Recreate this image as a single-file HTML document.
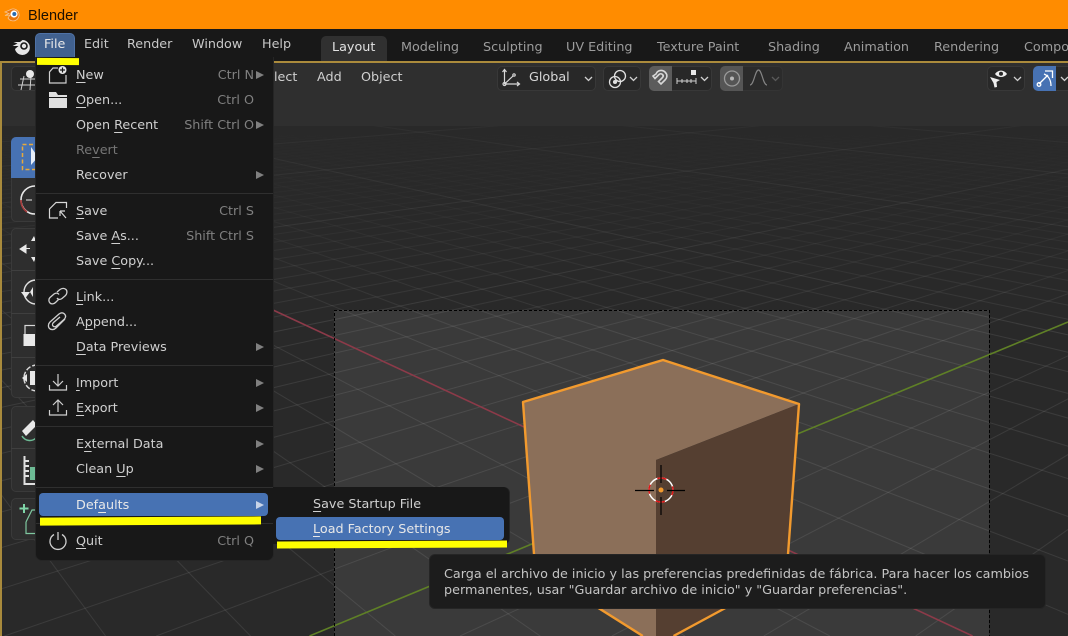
<!DOCTYPE html>
<html><head><meta charset="utf-8"><style>
*{box-sizing:border-box}
html,body{margin:0;padding:0}
body{width:1068px;height:636px;overflow:hidden;position:relative;background:#282828;font-family:"DejaVu Sans",sans-serif;font-size:12.75px;color:#d0d0d0}
div,span.a{position:absolute}
.t{height:20px;line-height:20px;white-space:nowrap}
u{text-decoration:underline;text-underline-offset:3px;text-decoration-thickness:1px}
.r{left:76px}
.k{right:814px;color:#808080}
.ar{width:0;height:0;border-left:8px solid #808080;border-top:4px solid transparent;border-bottom:4px solid transparent;left:256px;margin-top:1px}
.sep{left:36px;width:237px;height:1px;background:#2f2f2f}
.w{background:#282828;border:1px solid #383838;border-radius:5px}
.tab{top:38px;color:#9c9c9c}
.m{top:35px;color:#c8c8c8}
svg{position:absolute;overflow:visible}
</style></head><body>

<svg id="vp" style="left:0;top:0;overflow:hidden" width="1068" height="636" viewBox="0 0 1068 636">
<defs>
<linearGradient id="gm" gradientUnits="userSpaceOnUse" x1="0" y1="126" x2="0" y2="340"><stop offset="0" stop-color="#fff" stop-opacity="0"/><stop offset=".35" stop-color="#fff" stop-opacity=".02"/><stop offset="1" stop-color="#fff" stop-opacity=".085"/></linearGradient>
<linearGradient id="gM" gradientUnits="userSpaceOnUse" x1="0" y1="126" x2="0" y2="340"><stop offset="0" stop-color="#fff" stop-opacity=".03"/><stop offset="1" stop-color="#fff" stop-opacity=".1"/></linearGradient>
</defs>
<rect x="0" y="0" width="1068" height="636" fill="#292929"/>
<rect x="334" y="310" width="655" height="326" fill="#3a3a3a"/>
<g id="grid" fill="none" stroke-width="1"></g>
<line x1="273" y1="310" x2="972.600" y2="636" stroke="#8c3a49" stroke-width="1.6"/>
<line x1="1068" y1="322" x2="309.500" y2="636" stroke="#5f8026" stroke-width="1.6"/>
<path d="M523 402L663 360L799 404L656 460V636H642.800L535 568Z" fill="#8b6f59"/>
<path d="M656 460L799 404L786.500 575L673.500 636H656Z" fill="#553f31"/>
<path d="M642.800 636L535 568L523 402L663 360L799 404L786.500 575L673.500 636" fill="none" stroke="#f29a2e" stroke-width="2.400" stroke-linejoin="round"/>
<path d="M334.500 636V310.500H989.500V636" fill="none" stroke="#000" stroke-width="1" stroke-dasharray="3 2"/>
<circle cx="661" cy="490" r="12" fill="none" stroke="#fff" stroke-width="1.5"/>
<circle cx="661" cy="490" r="12" fill="none" stroke="#e01515" stroke-width="1.5" stroke-dasharray="9.400 9.400" stroke-dashoffset="4"/>
<path d="M635 490.500H654M667 490.500H685M661 465V483M661 497V515" stroke="#000" stroke-width="1.200"/>
<circle cx="661" cy="490" r="2.500" fill="#f29a2e"/>
</svg>

<!-- viewport header -->
<div style="left:0;top:63px;width:1068px;height:63px;background:#2f2f2f"></div>
<!-- gold frame -->
<div style="left:0;top:61px;width:1068px;height:2px;background:#ab8b3c"></div>
<div style="left:0;top:61px;width:1.500px;height:575px;background:#a88a3c"></div>

<!-- title bar -->
<div style="left:0;top:0;width:1068px;height:29px;background:#ff8c00"></div>
<svg style="left:4px;top:6px" width="18" height="16" viewBox="0 0 18 16"><path d="M1 6L8 3A6 6 0 1 1 4 12L6 9L1 9.500L5 7.500Z" fill="#e8740c" stroke="#f6c48c" stroke-width=".8"/><circle cx="10" cy="8" r="3.600" fill="#fff"/><circle cx="10.300" cy="8" r="2" fill="#2a6bb0"/></svg>
<div class="t" style="left:28px;top:6px;font:14.500px/20px 'Liberation Sans',sans-serif;color:#1c1000">Blender</div>

<!-- top bar -->
<div style="left:0;top:29px;width:1068px;height:32px;background:#181818"></div>
<svg style="left:12px;top:35px" width="20" height="20" viewBox="0 0 20 20"><path d="M1.500 7H8L10.500 5A7.500 7.500 0 1 1 3 14L6.500 11L.5 11L5.500 8.500" fill="#e6e6e6"/><circle cx="12" cy="11" r="3.800" fill="#181818"/><circle cx="12" cy="11" r="2.200" fill="#e6e6e6"/></svg>
<div style="left:35px;top:33px;width:40px;height:25px;background:#41618f;border-radius:5px 5px 0 0;border:1px solid #4f72a6;border-bottom:0"></div>
<div class="t m" style="left:44px;top:35px;color:#e8e8e8">File</div>
<div class="t m" style="left:84px">Edit</div>
<div class="t m" style="left:127px">Render</div>
<div class="t m" style="left:192px">Window</div>
<div class="t m" style="left:262px">Help</div>
<div style="left:321px;top:36px;width:66px;height:25px;background:#303030;border-radius:5px 5px 0 0"></div>
<div class="t tab" style="left:332px;color:#e2e2e2">Layout</div>
<div class="t tab" style="left:401px">Modeling</div>
<div class="t tab" style="left:483px">Sculpting</div>
<div class="t tab" style="left:566px">UV Editing</div>
<div class="t tab" style="left:657px">Texture Paint</div>
<div class="t tab" style="left:768px">Shading</div>
<div class="t tab" style="left:844px">Animation</div>
<div class="t tab" style="left:934px">Rendering</div>
<div class="t tab" style="left:1024px;width:44px;overflow:hidden">Compo</div>

<!-- header widgets -->
<div class="w" style="left:11px;top:66px;width:30px;height:25px"></div>
<svg style="left:0;top:60px" width="40" height="40" viewBox="0 0 40 40"><path d="M20 19H35M18 25H35M24 16L21 30M31 16L30 30" stroke="#cfcfcf" stroke-width="1" fill="none"/><circle cx="30" cy="14" r="4" fill="#e8e8e8"/></svg>
<div class="t" style="left:258px;top:68px">Select</div>
<div class="t" style="left:317px;top:68px">Add</div>
<div class="t" style="left:361px;top:68px">Object</div>

<div class="w" style="left:497px;top:66px;width:99px;height:25px"></div>
<svg style="left:500px;top:67px" width="22" height="22" viewBox="0 0 22 22" fill="none" stroke="#d8d8d8" stroke-width="1.200"><path d="M4.500 17V3M2.500 5L4.500 2.500L6.500 5M4.500 17H19M17 15L19.500 17L17 19M4.500 17L13 9"/><circle cx="4.500" cy="17" r="1.500"/><circle cx="14" cy="8" r="1.200"/></svg>
<div class="t" style="left:529px;top:68px;color:#d8d8d8">Global</div>
<svg style="left:584px;top:75px" width="10" height="8" viewBox="0 0 10 8"><path d="M1 2L4.500 5.500L8 2" fill="none" stroke="#d0d0d0" stroke-width="1.300"/></svg>

<div class="w" style="left:603px;top:66px;width:38px;height:25px"></div>
<svg style="left:607px;top:68px" width="22" height="22" viewBox="0 0 22 22" fill="none" stroke="#e0e0e0" stroke-width="1.300"><circle cx="13" cy="8" r="5.500"/><circle cx="8" cy="14" r="5.500"/><circle cx="8" cy="14" r="1.400" fill="#e0e0e0"/></svg>
<svg style="left:629px;top:75px" width="10" height="8" viewBox="0 0 10 8"><path d="M1 2L4.500 5.500L8 2" fill="none" stroke="#d0d0d0" stroke-width="1.300"/></svg>

<div class="w" style="left:649px;top:66px;width:63px;height:25px"></div>
<div style="left:649px;top:66px;width:23px;height:25px;background:#5c5c5c;border-radius:5px 0 0 5px"></div>
<svg style="left:650px;top:67px" width="21" height="22" viewBox="0 0 21 22" fill="none" stroke="#d8d8d8" stroke-width="1.600"><path d="M6 7A5.500 5.500 0 0 1 15 5C18 8 17 11 15 13L11 17L8.500 14.500L12.500 10.500C13.500 9.500 13.500 8.500 12.500 7.500C11.500 6.500 10 6.500 9 7.500L5 11.500L3 9Z" /></svg>
<svg style="left:675px;top:68px" width="24" height="20" viewBox="0 0 24 20" fill="none" stroke="#d0d0d0" stroke-width="1"><path d="M2 10V16M2 13H21M7 11V15M12 11V15M16 11V15M21 10V16"/><rect x="16" y="2" width="5" height="5" fill="#e8e8e8" stroke="none"/></svg>
<svg style="left:700px;top:75px" width="10" height="8" viewBox="0 0 10 8"><path d="M1 2L4.500 5.500L8 2" fill="none" stroke="#d0d0d0" stroke-width="1.300"/></svg>

<div class="w" style="left:720px;top:66px;width:63px;height:25px;background:#2b2b2b;border-color:#343434"></div>
<div style="left:720px;top:66px;width:23px;height:25px;background:#555;border-radius:5px 0 0 5px"></div>
<svg style="left:721px;top:68px" width="22" height="22" viewBox="0 0 22 22" fill="none" stroke="#9a9a9a" stroke-width="1.300"><circle cx="11" cy="10.500" r="7.500"/><circle cx="11" cy="10.500" r="2" fill="#b8b8b8" stroke="none"/></svg>
<svg style="left:748px;top:67px" width="22" height="22" viewBox="0 0 22 22" fill="none" stroke="#858585" stroke-width="1.200"><path d="M2 18C6 18 7 3 10.500 3C14 3 15 18 19 18"/></svg>
<svg style="left:771px;top:75px" width="10" height="8" viewBox="0 0 10 8"><path d="M1 2L4.500 5.500L8 2" fill="none" stroke="#5a5a5a" stroke-width="1.300"/></svg>

<div class="w" style="left:987px;top:66px;width:38px;height:25px"></div>
<svg style="left:989px;top:67px" width="22" height="22" viewBox="0 0 22 22"><path d="M6 7C9 2.500 15 2.500 18 7C15 11 9 11 6 7Z" fill="#eee"/><circle cx="12" cy="6.800" r="2" fill="#282828"/><path d="M1 10L11 13L7.500 15L8 20L5.500 20.500L4.500 16Z" fill="#eee"/></svg>
<svg style="left:1013px;top:75px" width="10" height="8" viewBox="0 0 10 8"><path d="M1 2L4.500 5.500L8 2" fill="none" stroke="#d0d0d0" stroke-width="1.300"/></svg>
<div style="left:1056px;top:66px;width:12px;height:25px;background:#282828;border-top:1px solid #383838;border-bottom:1px solid #383838"></div>
<div style="left:1033px;top:66px;width:23px;height:25px;background:#4772b3;border-radius:5px 0 0 5px"></div>
<svg style="left:1034px;top:67px" width="22" height="22" viewBox="0 0 22 22" fill="none" stroke="#fff" stroke-width="1.300"><path d="M5 17L14 8"/><circle cx="5" cy="17.500" r="1.800"/><path d="M11 4H18.500V11"/><path d="M10 7C15 9 17 14 17 19"/></svg>
<svg style="left:1060px;top:75px" width="8" height="8" viewBox="0 0 8 8"><path d="M1 2L4.500 5.500L8 2" fill="none" stroke="#d0d0d0" stroke-width="1.300"/></svg>

<!-- tool shelf -->
<div style="left:11px;top:137px;width:30px;height:85px;background:#2e2e2e;border:1px solid #3a3a3a;border-radius:5px"></div>
<div style="left:11px;top:137px;width:30px;height:41px;background:#4772b3;border-radius:5px 5px 0 0"></div>
<div style="left:11px;top:228px;width:30px;height:170px;background:#2e2e2e;border:1px solid #3a3a3a;border-radius:5px"></div>
<div style="left:11px;top:270px;width:30px;height:1px;background:#3f3f3f"></div>
<div style="left:11px;top:313px;width:30px;height:1px;background:#3f3f3f"></div>
<div style="left:11px;top:357px;width:30px;height:1px;background:#3f3f3f"></div>
<div style="left:11px;top:406px;width:30px;height:86px;background:#2e2e2e;border:1px solid #3a3a3a;border-radius:5px"></div>
<div style="left:11px;top:448px;width:30px;height:1px;background:#3f3f3f"></div>
<div style="left:11px;top:498px;width:30px;height:42px;background:#2e2e2e;border:1px solid #3a3a3a;border-radius:5px"></div>
<svg style="left:0;top:0" width="40" height="560" viewBox="0 0 40 560" fill="none">
<rect x="22.500" y="144.500" width="17" height="25" stroke="#e8a93c" stroke-width="1.500" stroke-dasharray="4 2.500"/>
<path d="M31 147L38 157L31 165Z" fill="#e8eef8"/>
<circle cx="35" cy="200" r="14" stroke="#e8e8e8" stroke-width="1.600"/>
<path d="M21 200A14 14 0 0 0 27 212" stroke="#a63a3a" stroke-width="1.600"/>
<path d="M26 200H32" stroke="#aaa" stroke-width="1.500"/>
<path d="M20 249L26 245V253Z M26 248.500H30" fill="#e8e8e8" stroke="#e8e8e8"/>
<path d="M34 236L31 241H36ZM34 262L31 257H36Z" fill="#e8e8e8"/>
<circle cx="36" cy="292" r="12" stroke="#e0e0e0" stroke-width="1.400"/>
<path d="M21 292H30L25.500 298ZM33 287V297L30 292Z" fill="#e8e8e8"/>
<rect x="25" y="325.500" width="12" height="10" stroke="#d8d8d8" stroke-width="1.200"/>
<rect x="23.500" y="334" width="13" height="12" fill="#e8e8e8"/>
<circle cx="37" cy="378" r="13" stroke="#d8d8d8" stroke-width="1.500" stroke-dasharray="5 2"/>
<rect x="30" y="371" width="8" height="14" fill="#e8e8e8"/>
<path d="M22 378L27 374V382Z" fill="#e8e8e8"/>
<path d="M22 431L33 420L37 425L26 436Z" fill="#e8e8e8"/>
<path d="M22 436A9 9 0 0 0 36 438" stroke="#6dbb95" stroke-width="1.500"/>
<path d="M24.500 456V484H35M24.500 461H29M24.500 466H29M24.500 471H29M24.500 476H29" stroke="#e0e0e0" stroke-width="2"/>
<rect x="30" y="467" width="6" height="13" fill="#6dbb95"/>
<path d="M24 504V513M19.500 508.500H28.500" stroke="#7fd6a8" stroke-width="2"/>
<path d="M26 522V533.500H36M26 522L32 510H38" stroke="#7fc8a0" stroke-width="1.200"/>
</svg>

<!-- file menu -->
<div style="left:36px;top:57px;width:237px;height:503px;background:#181818;border-radius:0 0 6px 6px;box-shadow:1px 0 0 #252525,0 1px 0 #252525,-1px 0 0 #252525"></div>
<div style="left:37px;top:57.500px;width:42px;height:6.500px;background:#ffff00;transform:rotate(.5deg)"></div>

<svg style="left:46px;top:64px" width="24" height="20" viewBox="0 0 24 20" fill="none" stroke="#cfcfcf" stroke-width="1.200"><path d="M12 4H7L3.500 8V19H20V11"/><circle cx="16.500" cy="6" r="4" fill="#e8e8e8" stroke="none"/><path d="M16.500 3.500V8.500M14 6H19" stroke="#181818"/></svg>
<svg style="left:46px;top:90px" width="24" height="20" viewBox="0 0 24 20"><path d="M3 2H10L12 5H21V7H3Z" fill="#e0e0e0"/><rect x="3" y="8" width="18" height="10" fill="#e0e0e0"/></svg>
<svg style="left:46px;top:200px" width="24" height="20" viewBox="0 0 24 20" fill="none" stroke="#d8d8d8" stroke-width="1.200"><path d="M12 18H3.500V9L10 2.500H20.500V8M14 11L20 18M14 11V16M14 11H19"/></svg>
<svg style="left:46px;top:286px" width="24" height="20" viewBox="0 0 24 20" fill="none" stroke="#cfcfcf" stroke-width="1.300"><path d="M11 6L14 3.500C16 2 18.500 2 20 3.500C21.500 5 21 8 19.500 9.500L16 12.500C14 14 12 13.500 11 12"/><path d="M13 13L9.500 16.500C8 18 5.500 18.500 4 17C2.500 15.500 2.500 13 4 11.500L8 8C10 6.500 12 7 13 8.500"/></svg>
<svg style="left:46px;top:311px" width="24" height="20" viewBox="0 0 24 20" fill="none" stroke="#cfcfcf" stroke-width="1.300"><path d="M19 8L10 17C8 19 5 19 3.500 17.500C2 16 2 13 4 11L13 3C15 1.500 17 1.500 18.500 3C20 4.500 20 6.500 18 8.500L10.500 15C9.500 16 8 16 7 15C6 14 6.500 12.500 7.500 11.500L14 6"/></svg>
<svg style="left:46px;top:372px" width="24" height="20" viewBox="0 0 24 20" fill="none" stroke="#cfcfcf" stroke-width="1.200"><path d="M12 2V14M7 9L12 14L17 9M3.500 13V18H20.500V13"/></svg>
<svg style="left:46px;top:397px" width="24" height="20" viewBox="0 0 24 20" fill="none" stroke="#cfcfcf" stroke-width="1.200"><path d="M12 15V3M7 8L12 3L17 8M3.500 13V18H20.500V13"/></svg>
<svg style="left:46px;top:530px" width="24" height="20" viewBox="0 0 24 20" fill="none" stroke="#cfcfcf" stroke-width="1.300"><path d="M12 2V10M8 4.500A8 8 0 1 0 16 4.500"/></svg>

<div class="t r" style="top:66px"><u>N</u>ew</div><div class="t k" style="top:66px">Ctrl N</div><div class="ar" style="top:70px"></div>
<div class="t r" style="top:91px"><u>O</u>pen...</div><div class="t k" style="top:91px">Ctrl O</div>
<div class="t r" style="top:116px">Open <u>R</u>ecent</div><div class="t k" style="top:116px">Shift Ctrl O</div><div class="ar" style="top:120px"></div>
<div class="t r" style="top:141px;color:#767676">Re<u>v</u>ert</div>
<div class="t r" style="top:166px">Recover</div><div class="ar" style="top:170px"></div>
<div class="sep" style="top:193px"></div>
<div class="t r" style="top:202px"><u>S</u>ave</div><div class="t k" style="top:202px">Ctrl S</div>
<div class="t r" style="top:227px">Save <u>A</u>s...</div><div class="t k" style="top:227px">Shift Ctrl S</div>
<div class="t r" style="top:252px">Save <u>C</u>opy...</div>
<div class="sep" style="top:279px"></div>
<div class="t r" style="top:288px"><u>L</u>ink...</div>
<div class="t r" style="top:313px">A<u>p</u>pend...</div>
<div class="t r" style="top:338px"><u>D</u>ata Previews</div><div class="ar" style="top:342px"></div>
<div class="sep" style="top:365px"></div>
<div class="t r" style="top:374px"><u>I</u>mport</div><div class="ar" style="top:378px"></div>
<div class="t r" style="top:399px"><u>E</u>xport</div><div class="ar" style="top:403px"></div>
<div class="sep" style="top:426px"></div>
<div class="t r" style="top:435px">E<u>x</u>ternal Data</div><div class="ar" style="top:439px"></div>
<div class="t r" style="top:460px">Clean <u>U</u>p</div><div class="ar" style="top:464px"></div>
<div class="sep" style="top:487px"></div>
<div style="left:39px;top:493px;width:229px;height:23px;background:#4772b3;border-radius:4px"></div>
<div class="t r" style="top:496px;color:#e8e8e8">Def<u>a</u>ults</div><div class="ar" style="top:500px;border-left-color:#c8d4e8"></div>
<div class="sep" style="top:523px"></div>
<div class="t r" style="top:532px"><u>Q</u>uit</div><div class="t k" style="top:532px">Ctrl Q</div>
<div style="left:40px;top:517px;width:221px;height:7.500px;background:#ffff00;transform:rotate(-.3deg)"></div>

<!-- submenu -->
<div style="left:273px;top:487px;width:236px;height:57px;background:#181818;border-radius:0 6px 6px 0;box-shadow:1px 0 0 #252525"></div>
<div class="t" style="left:313px;top:495px"><u>S</u>ave Startup File</div>
<div style="left:276px;top:517px;width:228px;height:23px;background:#4772b3;border-radius:4px"></div>
<div class="t" style="left:313px;top:520px;color:#e8e8e8"><u>L</u>oad Factory Settings</div>
<div style="left:277px;top:540.500px;width:230px;height:6.500px;background:#ffff00;transform:rotate(-.25deg)"></div>

<!-- tooltip -->
<div style="left:429px;top:554px;width:617px;height:55px;background:#1c1c1c;border:1px solid #252525;border-radius:6px"></div>
<div class="t" style="left:444px;top:565px;color:#c4c4c4">Carga el archivo de inicio y las preferencias predefinidas de fábrica. Para hacer los cambios</div>
<div class="t" style="left:444px;top:581px;color:#c4c4c4">permanentes, usar "Guardar archivo de inicio" y "Guardar preferencias".</div>

<script>
(function(){
var O=[661,490],V1=[-349,20],V2=[1797,20],a=.108,b=.103;
function P(u,v){var d=1+a*u+b*v;return [(O[0]+a*u*V1[0]+b*v*V2[0])/d,(O[1]+a*u*V1[1]+b*v*V2[1])/d];}
var h='';
function ray(V,p,M){var t=(636-V[1])/(p[1]-V[1]);var x=V[0]+t*(p[0]-V[0]);
 h+='<line x1="'+V[0]+'" y1="'+V[1]+'" x2="'+x.toFixed(1)+'" y2="636" stroke="url(#'+(M?'gM':'gm')+')"/>';}
for(var k=-17;k<=400;k++){
 var M=k%10==0;
 if(k==0)continue;
 if(!M&&k>70)continue;
 ray(V2,P(k/2,0),M);
 ray(V1,P(0,k/2),M);
}
document.getElementById('grid').innerHTML=h;
})();
</script>
</body></html>
